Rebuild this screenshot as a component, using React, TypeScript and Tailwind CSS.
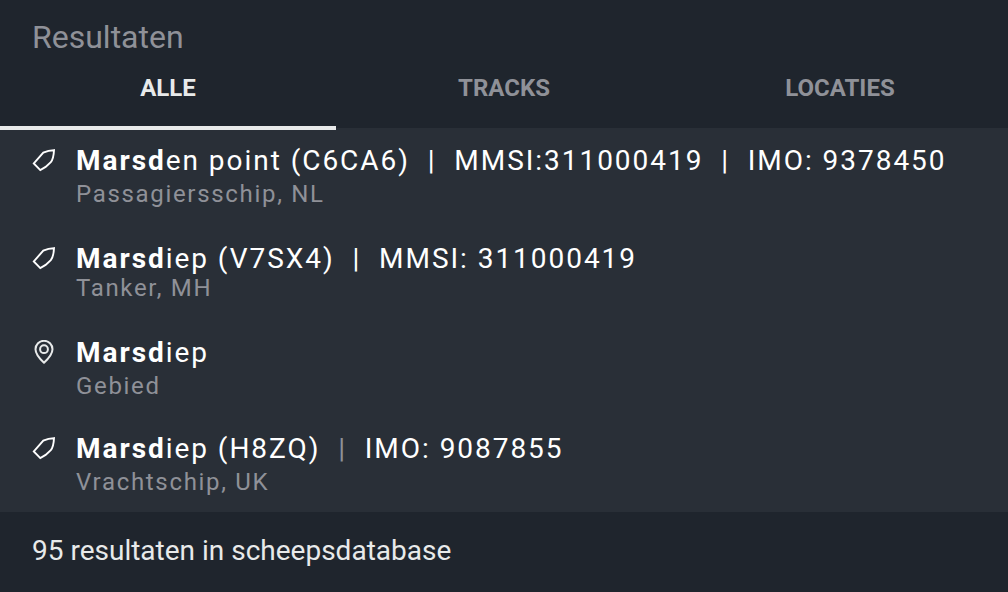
import React from 'react';

type Result = {
  id: number;
  kind: 'ship' | 'location';
  match: string;
  rest: string;
  details: string[];
  subtitle: string;
  compact?: boolean;
  dimmed?: boolean;
};

const tabs = ['Alle', 'Tracks', 'Locaties'];

const results: Result[] = [
  { id: 1, kind: 'ship', match: 'Marsd', rest: 'en point (C6CA6)', details: ['MMSI:311000419', 'IMO: 9378450'], subtitle: 'Passagiersschip, NL' },
  { id: 2, kind: 'ship', match: 'Marsd', rest: 'iep (V7SX4)', details: ['MMSI: 311000419'], subtitle: 'Tanker, MH', compact: true },
  { id: 3, kind: 'location', match: 'Marsd', rest: 'iep', details: [], subtitle: 'Gebied' },
  { id: 4, kind: 'ship', match: 'Marsd', rest: 'iep (H8ZQ)', details: ['IMO: 9087855'], subtitle: 'Vrachtschip, UK', dimmed: true },
];

function ShipIcon() {
  return (
    <svg className="mb-0.5 size-6" viewBox="0 0 24 24" fill="none" stroke="#fff" strokeWidth="1.9" strokeLinejoin="miter" aria-hidden="true">
      <path d="M22 2.2 L16.5 2.9 L11.3 4.6 L1.8 15.4 L8.3 22.1 L13.6 18.9 L18.8 14.2 Q21.6 10.6 22 2.2 Z" />
    </svg>
  );
}

function LocationIcon() {
  return (
    <svg className="mb-0.5 size-6" viewBox="0 0 24 24" fill="none" stroke="#e8eaea" strokeWidth="2" strokeLinejoin="round" aria-hidden="true">
      <path d="M12 22.8 C9.2 20.2 3.5 14.6 3.5 9.3 A8.5 8.5 0 0 1 20.5 9.3 C20.5 14.6 14.8 20.2 12 22.8 Z" />
      <circle cx="12" cy="9.2" r="3.9" />
    </svg>
  );
}

function ResultRow({ result }: { result: Result }) {
  const { kind, match, rest, details, subtitle, compact, dimmed } = result;
  return (
    <li className="flex h-24 items-center px-8 pt-1">
      <div className="grid grid-cols-[24px_1fr] items-center gap-x-5 whitespace-pre">
        {kind === 'ship' ? <ShipIcon /> : <LocationIcon />}
        <p className={`text-[28px] tracking-[0.07em] text-white ${compact ? 'leading-7' : 'leading-8'}`}>
          <b className="font-bold">{match}</b>
          {rest}
          {details.map((detail) => (
            <span key={detail}>
              <span className={dimmed ? 'text-[#8f9198]' : ''}>{'  |  '}</span>
              {detail}
            </span>
          ))}
        </p>
        <p className={`col-start-2 text-2xl tracking-[0.07em] text-[#8f9198] ${compact ? 'leading-[30px]' : 'leading-[34px]'}`}>{subtitle}</p>
      </div>
    </li>
  );
}

export default function App() {
  return (
    <main className="min-h-screen bg-[#1f252d] font-[Roboto,sans-serif]">
      <h1 className="px-8 pt-4 text-[32px] leading-[42px] text-[#8f9198]">Resultaten</h1>
      <div className="grid h-[70px] grid-cols-3" role="tablist">
        {tabs.map((tab, i) => (
          <button
            key={tab}
            type="button"
            role="tab"
            aria-selected={i === 0}
            className={`relative flex justify-center pt-[14px] text-2xl font-bold uppercase ${
              i === 0 ? 'text-[#e8eaea]' : 'text-[#8f9198]'
            }`}
          >
            {tab}
            {i === 0 && <span className="absolute inset-x-0 -bottom-0.5 h-1 bg-[#e8eaea]" />}
          </button>
        ))}
      </div>
      <ul className="bg-[#292f37]">
        {results.map((result) => (
          <ResultRow key={result.id} result={result} />
        ))}
      </ul>
      <p className="px-8 py-5 text-[28px] leading-[38px] text-[#e8eaea]">95 resultaten in scheepsdatabase</p>
    </main>
  );
}
